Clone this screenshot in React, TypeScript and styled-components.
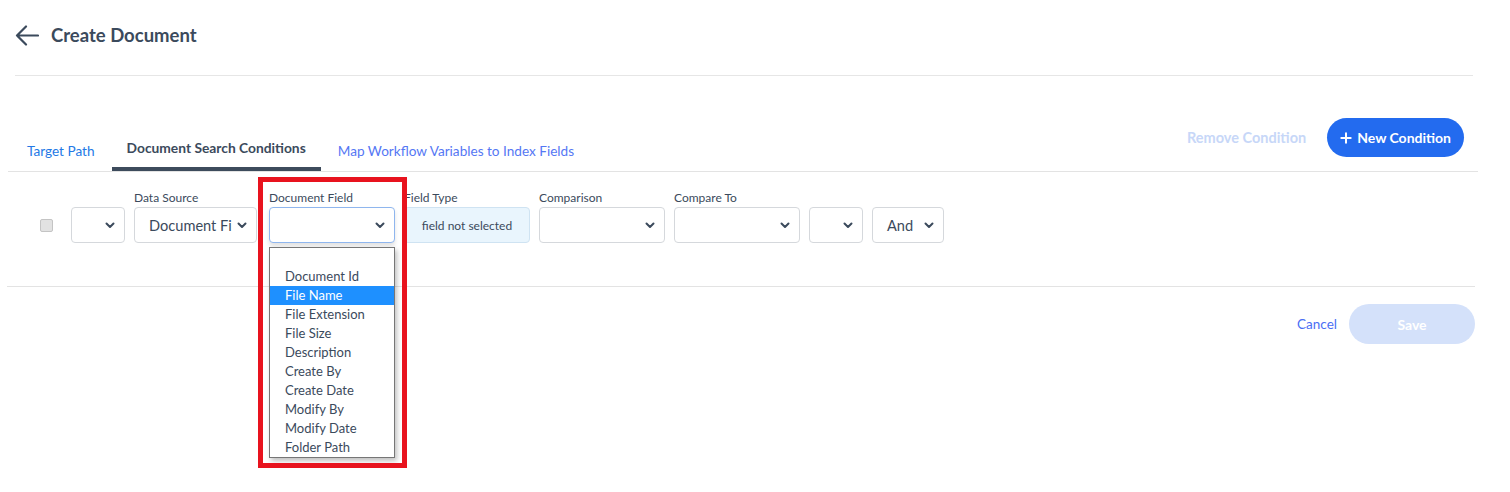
import React from "react"
import styled, { createGlobalStyle } from "styled-components"
import { Plus } from "lucide-react"

const GlobalStyle = createGlobalStyle`
  body {
    margin: 0;
    background: #ffffff;
    font-family: Lato, "Open Sans", Arial, sans-serif;
    color: #3b4a5c;
  }
  * {
    box-sizing: border-box;
  }
`

const Page = styled.div`
  width: 1510px;
  height: 492px;
  overflow: hidden;
`

const Header = styled.div`
  height: 70px;
  display: flex;
  align-items: center;
  gap: 12px;
  padding-left: 15px;
  color: #3b4a5c;
`

const Title = styled.h1`
  margin: 0;
  font-size: 18.5px;
  font-weight: 700;
  color: #3b4a5c;
`

const Divider = styled.div`
  margin: 5px 37px 0 15px;
  border-top: 1px solid #e6e6e6;
`

const TabRow = styled.div`
  display: flex;
  justify-content: space-between;
  align-items: flex-end;
  margin: 0 32px 0 8px;
  padding-top: 42px;
  border-bottom: 1px solid #e3e3e3;
`

const TabList = styled.div`
  display: flex;
  align-items: flex-end;
  gap: 2px;
  padding-left: 4px;
`

const Tab = styled.div<{ $active?: boolean; $muted?: boolean }>`
  padding: 0 15px ${(p) => (p.$active ? "10px" : "7px")};
  line-height: 18px;
  font-size: ${(p) => (p.$active ? "13.8px" : "13.6px")};
  font-weight: ${(p) => (p.$active ? 700 : 400)};
  color: ${(p) => (p.$active ? "#3b4a5c" : p.$muted ? "#5577f4" : "#2479e6")};
  border-bottom: 4px solid ${(p) => (p.$active ? "#3d4b5c" : "transparent")};
  white-space: nowrap;
`

const Actions = styled.div`
  display: flex;
  align-items: center;
  gap: 21px;
  margin: 0 14px 14px 0;
`

const GhostAction = styled.span`
  font-size: 14.5px;
  font-weight: 700;
  color: #c7d7f8;
`

const PrimaryButton = styled.button`
  display: flex;
  align-items: center;
  gap: 3px;
  height: 39px;
  padding: 0 13px 0 11px;
  border: none;
  border-radius: 20px;
  background: #236bef;
  color: #ffffff;
  font-family: inherit;
  font-size: 14px;
  font-weight: 700;
`

const ConditionRow = styled.div`
  display: flex;
  align-items: flex-end;
  gap: 9px;
  margin: 0 35px 0 7px;
  padding: 18px 0 43px 33px;
  border-bottom: 1px solid #e3e3e3;
`

const CheckBox = styled.div`
  width: 13px;
  height: 13px;
  margin: 0 9px 11px 0;
  border: 1px solid #c4c4c4;
  border-radius: 2px;
  background: #e2e2e2;
`

const Field = styled.div<{ $w: number; $after?: number }>`
  position: relative;
  width: ${(p) => p.$w}px;
  margin-right: ${(p) => p.$after ?? 0}px;
  display: flex;
  flex-direction: column;
`

const Label = styled.div`
  font-size: 12px;
  line-height: 16px;
  margin-bottom: 1px;
  color: #3b4a5c;
  white-space: nowrap;
`

const SelectBox = styled.div<{ $focused?: boolean }>`
  position: relative;
  height: 36px;
  display: flex;
  align-items: center;
  gap: 4px;
  padding: 0 9px 0 14px;
  border: 1px solid ${(p) => (p.$focused ? "#8fb6ee" : "#d5d8dc")};
  border-radius: 4px;
  background: #ffffff;
  box-shadow: ${(p) => (p.$focused ? "0 3px 4px rgba(0,0,0,0.12)" : "none")};
  font-size: 14.6px;
  color: #3b4a5c;
  white-space: nowrap;
`

const SelectText = styled.span`
  flex: 1;
`

const TypeBox = styled.div`
  height: 36px;
  display: flex;
  align-items: center;
  justify-content: center;
  border: 1px solid #cfe3f2;
  border-radius: 4px;
  background: #e9f5fd;
  font-size: 12px;
  color: #3b4a5c;
`

const OptionList = styled.div`
  position: absolute;
  top: 57px;
  left: 0;
  width: 126px;
  border: 1px solid #767676;
  background: #ffffff;
  box-shadow: 2px 3px 5px rgba(0, 0, 0, 0.25);
  z-index: 2;
`

const Option = styled.div<{ $selected?: boolean }>`
  height: 19px;
  line-height: 18px;
  padding-left: 15px;
  font-size: 13px;
  color: ${(p) => (p.$selected ? "#ffffff" : "#3b4a5c")};
  background: ${(p) => (p.$selected ? "#1e90ff" : "transparent")};
`

const Highlight = styled.div`
  position: absolute;
  left: -11px;
  top: -13px;
  width: 149px;
  height: 291px;
  border: 5px solid #e8131e;
  pointer-events: none;
  z-index: 3;
`

const Footer = styled.div`
  display: flex;
  justify-content: flex-end;
  align-items: center;
  gap: 12px;
  margin-right: 35px;
  padding-top: 17px;
`

const CancelLink = styled.span`
  font-size: 13.5px;
  color: #4a6ef4;
`

const SaveButton = styled.button`
  width: 126px;
  height: 40px;
  border: none;
  border-radius: 20px;
  background: #d4e1fa;
  color: #ffffff;
  font-family: inherit;
  font-size: 14px;
  font-weight: 700;
`

const BackArrow = () => (
  <svg width="24" height="21" viewBox="0 0 24 21" fill="none">
    <path
      d="M23 10.5H2M11 1.5l-9 9 9 9"
      stroke="#3b4a5c"
      strokeWidth="2.2"
      strokeLinecap="round"
      strokeLinejoin="round"
    />
  </svg>
)

const Chevron = () => (
  <svg width="10" height="7" viewBox="0 0 10 7" fill="none">
    <path d="M1.5 1.5l3.5 3.5 3.5-3.5" stroke="#3b4a5c" strokeWidth="2" strokeLinecap="round" strokeLinejoin="round" />
  </svg>
)

const Select = ({ value, focused }: { value?: string; focused?: boolean }) => (
  <SelectBox $focused={focused}>
    <SelectText>{value}</SelectText>
    <Chevron />
  </SelectBox>
)

const fieldOptions = [
  "",
  "Document Id",
  "File Name",
  "File Extension",
  "File Size",
  "Description",
  "Create By",
  "Create Date",
  "Modify By",
  "Modify Date",
  "Folder Path",
]

const App: React.FC = () => {
  return (
    <Page>
      <GlobalStyle />
      <Header>
        <BackArrow />
        <Title>Create Document</Title>
      </Header>
      <Divider />

      <TabRow>
        <TabList>
          <Tab>Target Path</Tab>
          <Tab $active>Document Search Conditions</Tab>
          <Tab $muted>Map Workflow Variables to Index Fields</Tab>
        </TabList>
        <Actions>
          <GhostAction>Remove Condition</GhostAction>
          <PrimaryButton>
            <Plus size={16} strokeWidth={3} />
            New Condition
          </PrimaryButton>
        </Actions>
      </TabRow>

      <ConditionRow>
        <CheckBox />
        <Field $w={54}>
          <Select />
        </Field>
        <Field $w={123} $after={3}>
          <Label>Data Source</Label>
          <Select value="Document Fi" />
        </Field>
        <Field $w={126}>
          <Label>Document Field</Label>
          <Select focused />
          <OptionList>
            {fieldOptions.map((opt, i) => (
              <Option key={i} $selected={opt === "File Name"}>
                {opt}
              </Option>
            ))}
          </OptionList>
          <Highlight />
        </Field>
        <Field $w={126}>
          <Label>Field Type</Label>
          <TypeBox>field not selected</TypeBox>
        </Field>
        <Field $w={126}>
          <Label>Comparison</Label>
          <Select />
        </Field>
        <Field $w={126}>
          <Label>Compare To</Label>
          <Select />
        </Field>
        <Field $w={54}>
          <Select />
        </Field>
        <Field $w={72}>
          <Select value="And" />
        </Field>
      </ConditionRow>

      <Footer>
        <CancelLink>Cancel</CancelLink>
        <SaveButton>Save</SaveButton>
      </Footer>
    </Page>
  )
}

export default App
